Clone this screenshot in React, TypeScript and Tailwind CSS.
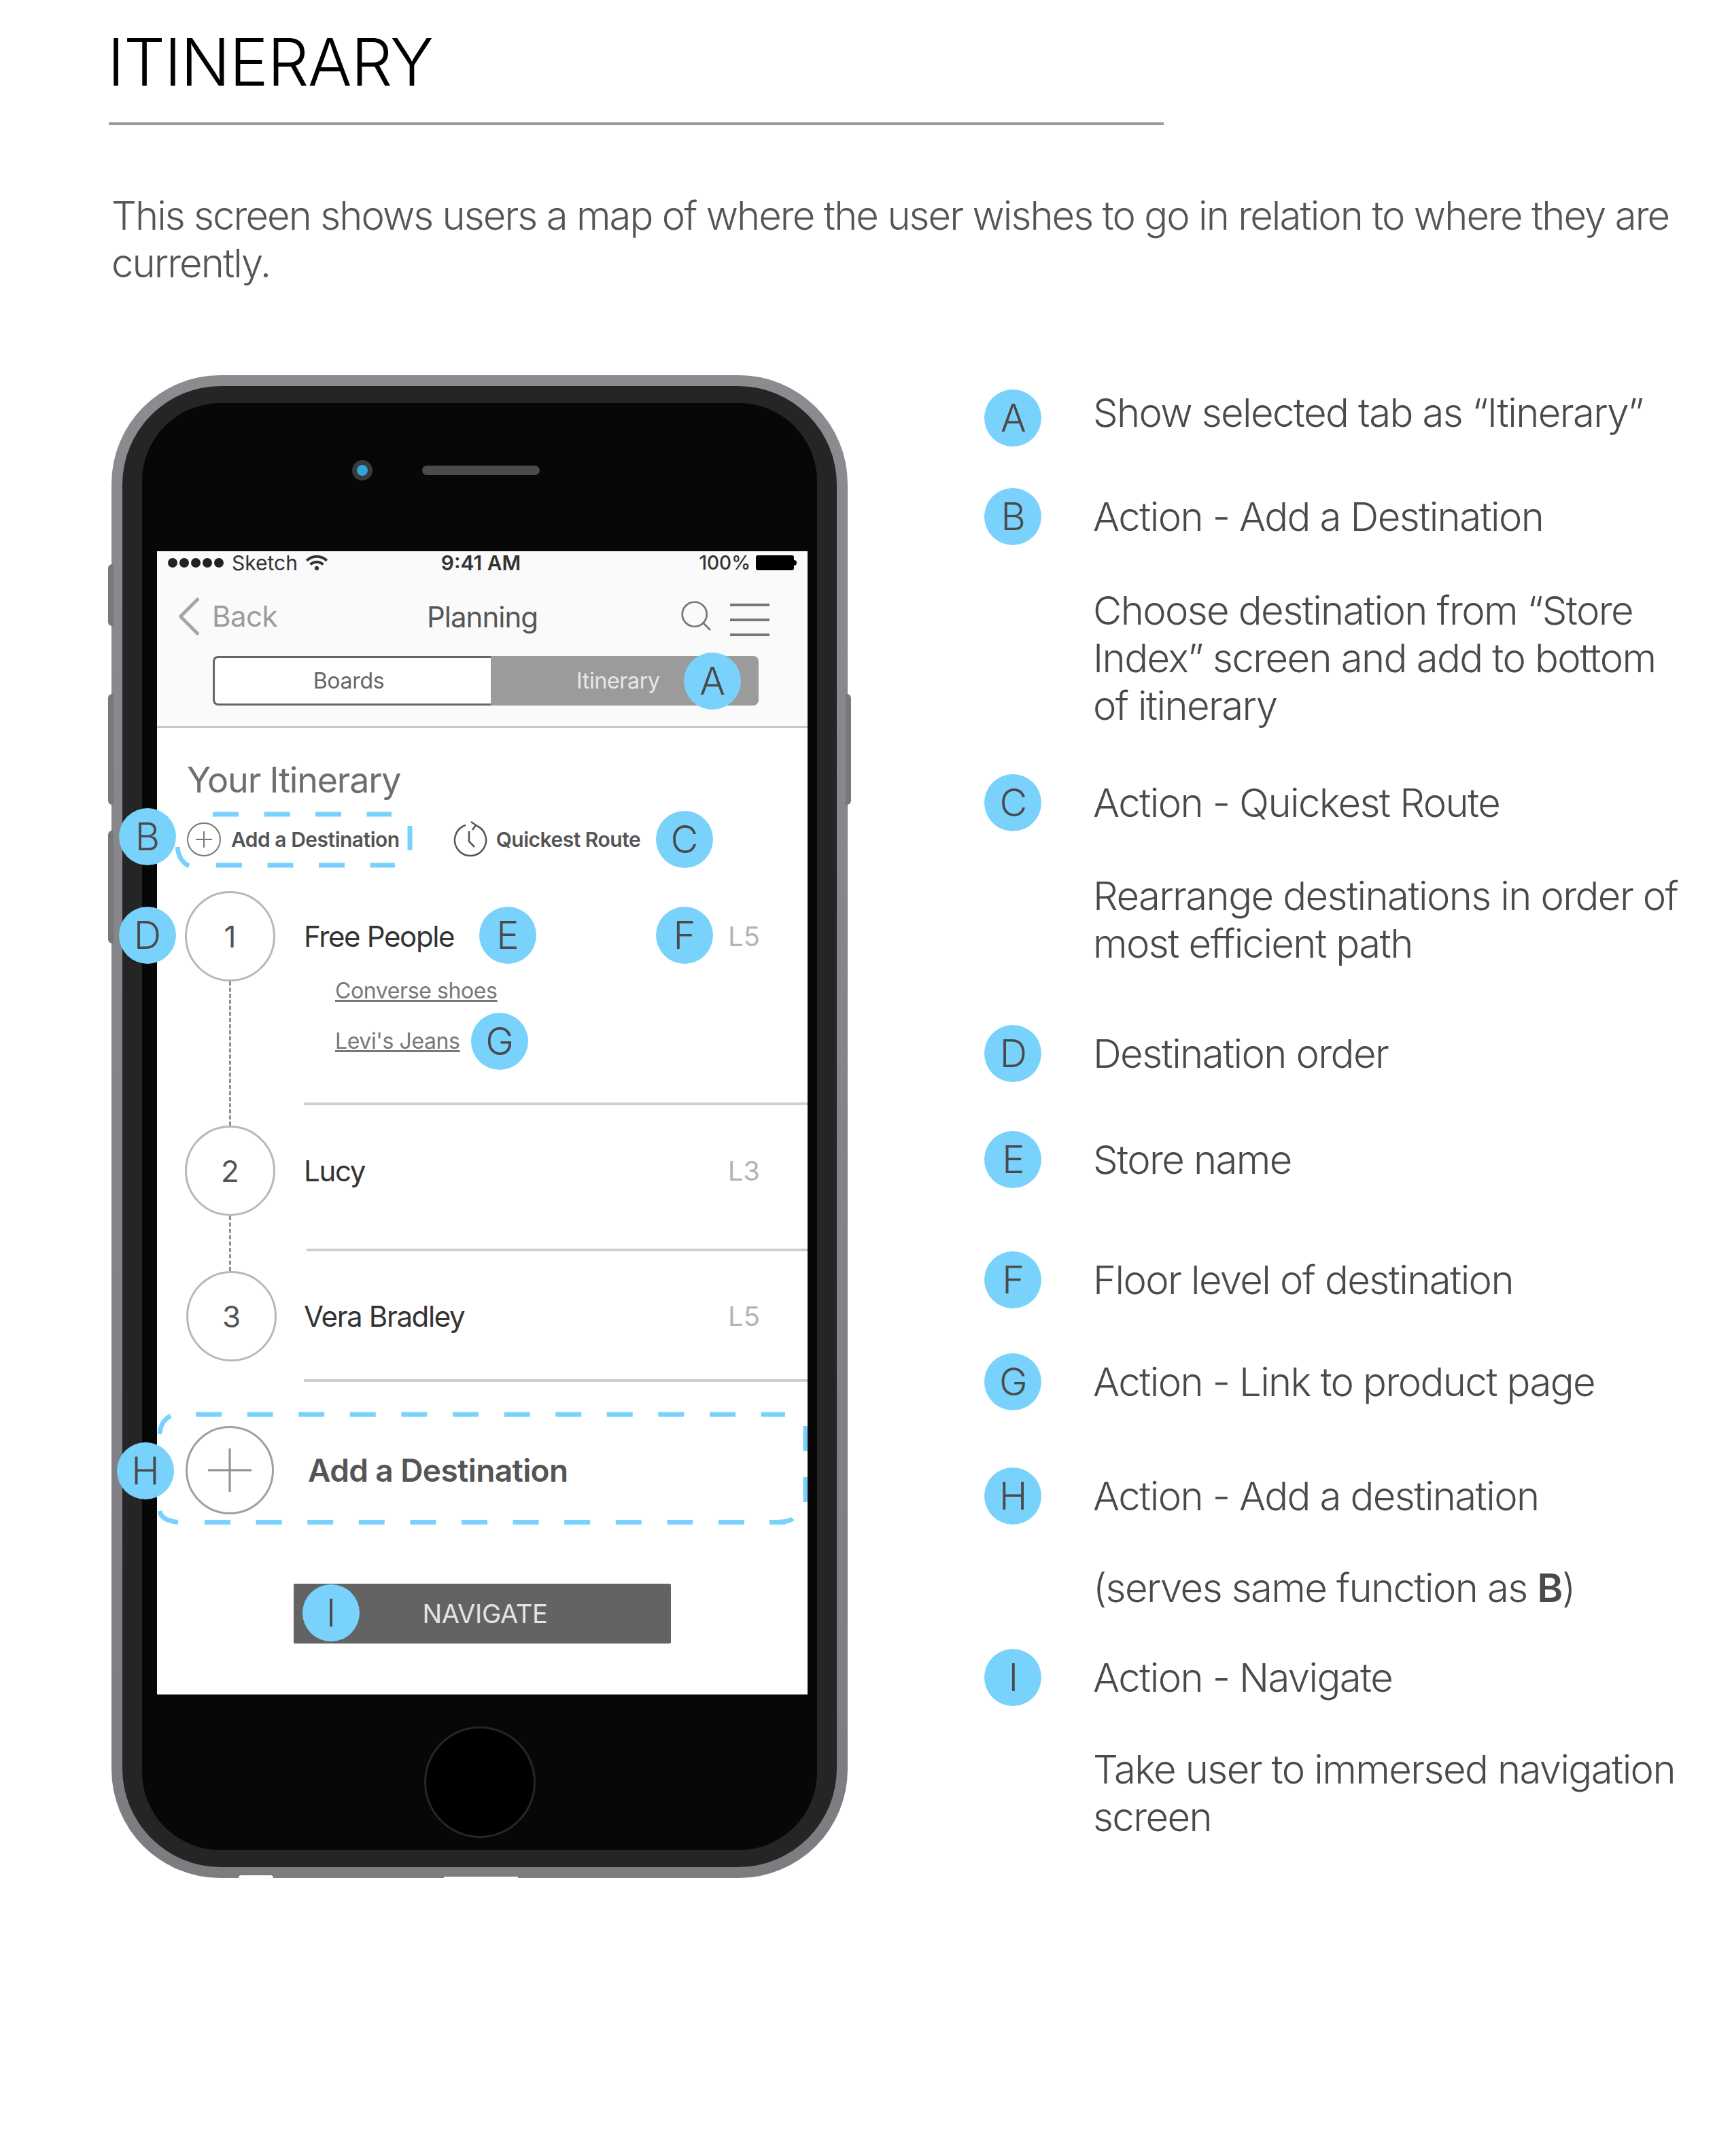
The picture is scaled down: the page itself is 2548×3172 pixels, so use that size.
import { ChevronLeft, Search } from "lucide-react";
import { FaWifi } from "react-icons/fa";

const legend = [
  { letter: "A", text: ["Show selected tab as “Itinerary”"], gap: "mt-0", badge: "mt-[1px]" },
  { letter: "B", text: ["Action - Add a Destination"], gap: "mt-[83px]" },
  { text: ["Choose destination from “Store", "Index” screen and add to bottom", "of itinerary"], gap: "mt-[68px]" },
  { letter: "C", text: ["Action - Quickest Route"], gap: "mt-[73px]" },
  { text: ["Rearrange destinations in order of", "most efficient path"], gap: "mt-[67px]" },
  { letter: "D", text: ["Destination order"], gap: "mt-[92px]" },
  { letter: "E", text: ["Store name"], gap: "mt-[86px]" },
  { letter: "F", text: ["Floor level of destination"], gap: "mt-[107px]" },
  { letter: "G", text: ["Action - Link to product page"], gap: "mt-[80px]" },
  { letter: "H", text: ["Action - Add a destination"], gap: "mt-[98px]" },
  { bold: true, text: ["(serves same function as "], gap: "mt-[65px]" },
  { letter: "I", text: ["Action - Navigate"], gap: "mt-[62px]" },
  { text: ["Take user to immersed navigation", "screen"], gap: "mt-[65px]" },
];

function Badge({ letter, className = "" }: { letter: string; className?: string }) {
  return (
    <div
      className={`flex size-[84px] items-center justify-center rounded-full bg-[#79d2fc] text-[56px] font-light leading-none text-[#4a4a4a] ${className}`}
    >
      {letter}
    </div>
  );
}

function Stop({
  num,
  name,
  level,
  height,
  sepTop,
  sepLeft,
  line,
  circleLeft = "ml-[41px]",
  children,
}: {
  num: string;
  name: string;
  level: string;
  height: string;
  sepTop: string;
  sepLeft: string;
  line?: boolean;
  circleLeft?: string;
  children?: React.ReactNode;
}) {
  return (
    <div className={`flex ${height}`}>
      <div className={`flex w-[133px] flex-col items-center ${circleLeft}`}>
        <div className="flex size-[133px] shrink-0 items-center justify-center rounded-full border-[3px] border-[#b8b8b8] text-[44px] text-[#555]">
          {num}
        </div>
        {line && <div className="flex-1 border-l-[3px] border-dashed border-[#909090]" />}
      </div>
      <div className={`flex flex-1 flex-col ${sepLeft}`}>
        <div className="flex h-[133px] shrink-0 items-center justify-between pr-[70px]">
          <span className="text-[42px] tracking-[-1.35px] text-[#333]">{name}</span>
          <span className="text-[40px] text-[#b4b4b4]">{level}</span>
        </div>
        {children}
        <div className={`h-[4px] bg-[#cfcfcf] ${sepTop}`} />
      </div>
    </div>
  );
}

function Phone() {
  return (
    <div className="relative h-[2211px] w-[1083px] shrink-0">
      <div className="absolute left-[-5px] top-[278px] h-[91px] w-[8px] rounded-l-md bg-[#77777c]" />
      <div className="absolute left-[-5px] top-[469px] h-[163px] w-[8px] rounded-l-md bg-[#77777c]" />
      <div className="absolute left-[-5px] top-[670px] h-[166px] w-[8px] rounded-l-md bg-[#77777c]" />
      <div className="absolute right-[-5px] top-[469px] h-[163px] w-[8px] rounded-r-md bg-[#77777c]" />
      <div className="absolute bottom-0 left-[187px] h-[4px] w-[51px] rounded-t-full bg-white" />
      <div className="absolute bottom-0 left-[489px] h-[2px] w-[109px] bg-white" />

      <div className="h-full rounded-[160px] bg-linear-to-b from-[#8c8c90] to-[#7c7c81] p-[16px]">
        <div className="h-full rounded-[145px] bg-[#252525] px-[29px] pb-[25px] pt-[25px]">
          <div className="flex h-full flex-col rounded-[115px] bg-[#070707]">
            <div className="relative h-[218px] shrink-0">
              <div className="absolute left-[309px] top-[84px] flex size-[30px] items-center justify-center rounded-full bg-[#3a3a3a]">
                <div className="size-[16px] rounded-full bg-[#2fa5d8]" />
              </div>
              <div className="absolute left-[412px] top-[92px] h-[14px] w-[173px] rounded-full bg-[#4a4a4a]" />
            </div>
            <Screen />
            <div className="flex flex-1 items-center justify-center pt-[28px]">
              <div className="size-[164px] rounded-full border-[3px] border-[#262626] bg-black" />
            </div>
          </div>
        </div>
      </div>
    </div>
  );
}

function Screen() {
  return (
    <div className="relative mx-[22px] h-[1682px] w-[957px] shrink-0 bg-white">
      {/* top bars */}
      <div className="h-[260px] border-b-[3px] border-[#c6c6c6] bg-[#fafafa]">
        <div className="grid h-[34px] grid-cols-[1fr_auto_1fr] items-center px-[16px] text-[28px] font-medium leading-none text-[#333]">
          <div className="flex items-center gap-[12px]">
            <div className="flex gap-[3px]">
              <span className="size-[14px] rounded-full bg-[#222]" />
              <span className="size-[14px] rounded-full bg-[#222]" />
              <span className="size-[14px] rounded-full bg-[#222]" />
              <span className="size-[14px] rounded-full bg-[#222]" />
              <span className="size-[14px] rounded-full bg-[#222]" />
            </div>
            <span className="text-[30px] font-normal">Sketch</span>
            <FaWifi className="size-[32px] text-[#333]" />
          </div>
          <span className="mr-[4px] text-[30px] font-semibold">9:41 AM</span>
          <div className="flex items-center justify-end gap-[8px]">
            <span>100%</span>
            <div className="flex items-center">
              <div className="h-[22px] w-[56px] rounded-[3px] bg-black" />
              <div className="h-[8px] w-[4px] rounded-r-sm bg-black" />
            </div>
          </div>
        </div>
        <div className="relative flex h-[120px] items-center justify-center">
          <ChevronLeft size={100} strokeWidth={1.2} className="absolute left-[-3px] top-[12px] text-[#a6a6a6]" />
          <span className="absolute left-[81px] top-[30px] text-[42px] tracking-[-0.5px] text-[#9b9b9b]">Back</span>
          <span className="mt-[4px] text-[42px] tracking-[-1px] text-[#555]">Planning</span>
          <Search size={54} strokeWidth={1.2} className="absolute left-[766px] top-[34px] text-[#777]" />
          <div className="absolute left-[843px] top-[43px] flex h-[48px] w-[58px] flex-col justify-between">
            <div className="h-[4px] bg-[#777]" />
            <div className="h-[4px] bg-[#777]" />
            <div className="h-[4px] bg-[#777]" />
          </div>
        </div>
        <div className="mx-[82px] flex h-[73px] w-[803px] text-[32px] tracking-[-0.3px]">
          <div className="flex w-[409px] items-center justify-center rounded-l-[8px] border-[3px] border-r-0 border-[#666] bg-white pr-[12px] text-[#666]">
            Boards
          </div>
          <div className="flex flex-1 items-center rounded-r-[8px] bg-[#9b9b9b] pl-[126px] text-[#e8e8e8]">
            Itinerary
          </div>
        </div>
      </div>

      {/* itinerary */}
      <h2 className="mt-[47px] h-[60px] pl-[44px] text-[52px] leading-[60px] tracking-[-1.2px] text-[#6e6e6e]">
        Your Itinerary
      </h2>
      <div className="mt-[27px] flex h-[60px] items-center text-[30px] font-semibold tracking-[-0.5px] text-[#555]">
        <div className="ml-[44px] flex size-[50px] items-center justify-center rounded-full border-2 border-[#777] text-[#777]">
          <svg width="28" height="28" viewBox="0 0 28 28" stroke="currentColor" strokeWidth="2">
            <path d="M14 2v24M2 14h24" />
          </svg>
        </div>
        <span className="ml-[15px]">Add a Destination</span>
        <svg className="ml-[77px]" width="52" height="56" viewBox="0 0 52 56" fill="none" stroke="#555" strokeWidth="2.5">
          <path d="M34 7A23 23 0 1 1 20 7" />
          <path d="M28 2l7 5-5 7" />
          <path d="M25 16v15l8 8" />
        </svg>
        <span className="ml-[13px]">Quickest Route</span>
      </div>

      <div className="mt-[46px]">
        <Stop num="1" name="Free People" level="L5" height="h-[345px]" sepTop="mt-[68px]" sepLeft="ml-[42px]" line>
          <div className="ml-[46px] mt-[-8px] flex flex-col gap-[30px] text-[32px] leading-[44px] tracking-[-0.4px] text-[#777] underline">
            <span>Converse shoes</span>
            <span>Levi's Jeans</span>
          </div>
        </Stop>
        <Stop num="2" name="Lucy" level="L3" height="h-[214px]" sepTop="ml-[4px] mt-[48px]" sepLeft="ml-[42px]" line>
        </Stop>
        <Stop num="3" name="Vera Bradley" level="L5" height="h-[228px]" sepTop="mt-[26px]" sepLeft="ml-[40px]" circleLeft="ml-[43px]" />
      </div>

      <div className="flex h-[130px] items-center">
        <div className="ml-[42px] flex size-[130px] items-center justify-center rounded-full border-[3px] border-[#a0a0a0] text-[#8f8f8f]">
          <svg width="68" height="68" viewBox="0 0 68 68" stroke="currentColor" strokeWidth="3">
            <path d="M34 2v64M2 34h64" />
          </svg>
        </div>
        <span className="ml-[50px] text-[46px] font-semibold tracking-[-0.6px] text-[#555]">Add a Destination</span>
      </div>

      <div className="ml-[201px] mt-[102px] flex h-[88px] w-[555px] items-center justify-center rounded-[2px] bg-[#636363] pl-[8px] text-[38px] tracking-[-0.3px] text-[#e4e4e4]">
        NAVIGATE
      </div>

      {/* annotation overlays */}
      <svg className="absolute left-0 top-[380px]" width="380" height="90" fill="none" stroke="#79d2fc" strokeWidth="7">
        <path d="M82 7H345" strokeDasharray="38 37.5" />
        <path d="M87 82H350" strokeDasharray="38 37.5" />
        <path d="M372 24V60" />
        <path d="M30 55Q32 76 47 83" />
      </svg>
      <svg className="absolute left-0 top-[1266px]" width="957" height="170" fill="none" stroke="#79d2fc" strokeWidth="7">
        <path d="M57 4H924" strokeDasharray="38 37.6" />
        <path d="M70 162.5H925" strokeDasharray="38 37.6" />
        <path d="M901 162.5Q930 163 935 157" />
        <path d="M20 6Q5 14 4 33" />
        <path d="M4 146Q6 160 31 162.5" />
        <path d="M954 21V58M954 96V133" />
      </svg>
      <Badge letter="A" className="absolute left-[775px] top-[149px]" />
      <Badge letter="B" className="absolute left-[-56px] top-[378px]" />
      <Badge letter="C" className="absolute left-[734px] top-[382px]" />
      <Badge letter="D" className="absolute left-[-56px] top-[523px]" />
      <Badge letter="E" className="absolute left-[474px] top-[523px]" />
      <Badge letter="F" className="absolute left-[734px] top-[523px]" />
      <Badge letter="G" className="absolute left-[462px] top-[679px]" />
      <Badge letter="H" className="absolute left-[-59px] top-[1311px]" />
      <Badge letter="I" className="absolute left-[214px] top-[1520px]" />
    </div>
  );
}

function Legend() {
  return (
    <div className="ml-[201px] pt-[20px] text-[58px] font-light leading-[70px] tracking-[-1.6px] text-[#4a4a4a]">
      {legend.map((row) => (
        <div key={row.text[0]} className={`flex ${row.gap}`}>
          <div className="h-[70px] w-[160px] shrink-0">
            {row.letter && <Badge letter={row.letter} className={row.badge ?? "mt-[-7px]"} />}
          </div>
          <div>
            {row.text.map((line) => (
              <div key={line} className="whitespace-pre">
                {line}
                {row.bold && (
                  <>
                    <b className="font-semibold">B</b>)
                  </>
                )}
              </div>
            ))}
          </div>
        </div>
      ))}
    </div>
  );
}

export default function App() {
  return (
    <div className="h-[3172px] w-[2548px] overflow-hidden bg-white pl-[160px] font-['Inter',sans-serif]">
      <h1 className="ml-[-2px] h-[180px] pt-[36px] text-[96px] font-light leading-[110px] tracking-[-1.2px] text-black">
        ITINERARY
      </h1>
      <div className="h-[4px] w-[1552px] bg-[#9a9a9a]" />
      <p className="ml-[4px] mt-[98px] w-[2340px] text-[58px] font-light leading-[70px] tracking-[-1.95px] text-[#555]">
        This screen shows users a map of where the user wishes to go in relation to where they are currently.
      </p>
      <div className="ml-[4px] mt-[130px] flex">
        <Phone />
        <Legend />
      </div>
    </div>
  );
}
